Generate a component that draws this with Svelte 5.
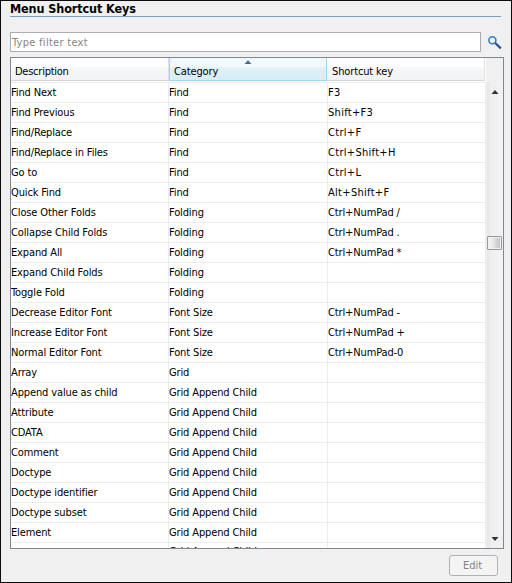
<script>
  const rows = [
    ['Find Next', 'Find', 'F3'],
    ['Find Previous', 'Find', 'Shift+F3'],
    ['Find/Replace', 'Find', 'Ctrl+F'],
    ['Find/Replace in Files', 'Find', 'Ctrl+Shift+H'],
    ['Go to', 'Find', 'Ctrl+L'],
    ['Quick Find', 'Find', 'Alt+Shift+F'],
    ['Close Other Folds', 'Folding', 'Ctrl+NumPad /'],
    ['Collapse Child Folds', 'Folding', 'Ctrl+NumPad .'],
    ['Expand All', 'Folding', 'Ctrl+NumPad *'],
    ['Expand Child Folds', 'Folding', ''],
    ['Toggle Fold', 'Folding', ''],
    ['Decrease Editor Font', 'Font Size', 'Ctrl+NumPad -'],
    ['Increase Editor Font', 'Font Size', 'Ctrl+NumPad +'],
    ['Normal Editor Font', 'Font Size', 'Ctrl+NumPad-0'],
    ['Array', 'Grid', ''],
    ['Append value as child', 'Grid Append Child', ''],
    ['Attribute', 'Grid Append Child', ''],
    ['CDATA', 'Grid Append Child', ''],
    ['Comment', 'Grid Append Child', ''],
    ['Doctype', 'Grid Append Child', ''],
    ['Doctype identifier', 'Grid Append Child', ''],
    ['Doctype subset', 'Grid Append Child', ''],
    ['Element', 'Grid Append Child', ''],
    ['', 'Grid Append Child', '']
  ];
</script>

<div class="window">
  <h1>Menu Shortcut Keys</h1>
  <div class="search">
    <div class="input">Type filter text</div>
    <svg width="15" height="15" viewBox="0 0 15 15">
      <circle cx="4.4" cy="5.2" r="3.5" fill="#f1f6fc" stroke="#2f7ccb" stroke-width="1.6" />
      <path d="M7.2 8 L12.9 13.3" stroke="#23549b" stroke-width="2.3" />
    </svg>
  </div>
  <div class="table">
    <div class="main">
      <div class="head">
        <div class="th">Description</div>
        <div class="th sorted">
          Category
          <svg class="arrow" width="8" height="4" viewBox="0 0 8 4"><path d="M0.5 4 L4 0.2 L7.5 4Z" fill="#3f7089" /></svg>
        </div>
        <div class="th last">Shortcut key</div>
      </div>
      <div class="body">
        {#each rows as row}
          <div class="row">
            <div class="cell">{row[0]}</div>
            <div class="cell category">{row[1]}</div>
            <div class="cell" class:wide={!row[2].includes('NumPad')}>{row[2]}</div>
          </div>
        {/each}
      </div>
    </div>
    <div class="scroll">
      <svg width="8" height="4" viewBox="0 0 8 4"><path d="M0.5 4 L4 0 L7.5 4Z" fill="#333" /></svg>
      <div class="thumb"></div>
      <svg width="8" height="4" viewBox="0 0 8 4"><path d="M0.5 0 L4 4 L7.5 0Z" fill="#333" /></svg>
    </div>
  </div>
  <div class="footer"><div class="button">Edit</div></div>
</div>

<style>
  :global(body) { overflow: hidden; }
  .window {
    box-sizing: border-box;
    width: 512px;
    height: 583px;
    padding: 0 8px 0 9px;
    border: 1px solid #0c0a0c;
    background: #f0f0f0;
    color: #000;
    font: 11px/14px "DejaVu Sans Condensed", "DejaVu Sans", sans-serif;
    white-space: nowrap;
  }
  h1 {
    box-sizing: border-box;
    width: 491px;
    height: 16px;
    margin: 0 0 15px;
    border-bottom: 1px solid #769fc6;
    font-size: 12.5px;
    line-height: 16px;
    font-weight: bold;
    letter-spacing: -0.1px;
  }
  .search { display: flex; gap: 7px; height: 20px; margin-bottom: 5px; }
  .search svg { margin-top: 3px; }
  .input {
    box-sizing: border-box;
    width: 472px;
    height: 20px;
    padding: 3px 1px 0;
    border: 1px solid #abadb3;
    background: #fff;
    color: #858585;
    letter-spacing: 0.28px;
  }
  .table {
    display: flex;
    box-sizing: border-box;
    width: 494px;
    height: 492px;
    border: 1px solid #828790;
    background: #f0f0f0;
    overflow: hidden;
    letter-spacing: -0.13px;
  }
  .main { width: 475px; height: 490px; overflow: hidden; background: #fff; }
  .head { display: flex; height: 24px; background: #fff; }
  .th {
    position: relative;
    box-sizing: border-box;
    width: 158px;
    height: 23px;
    padding: 7px 4px 0;
    border-right: 1px solid #dedfe1;
    border-bottom: 1px solid #d5d5d5;
    background: linear-gradient(#fff 0 9px, #f7f8fa 9px, #f1f2f4);
  }
  .th:first-child { letter-spacing: -0.25px; }
  .sorted {
    border: solid #96d9f9;
    border-width: 0 1px 1px;
    background: linear-gradient(#f2f9fc 0 9px, #e1f1f9 9px, #d8ecf6);
  }
  .arrow { position: absolute; left: 74px; top: 2px; }
  .last { padding-left: 5px; }
  .body { border-top: 1px solid #ececec; }
  .row { display: flex; height: 20px; }
  .cell {
    box-sizing: border-box;
    width: 158px;
    padding-top: 3px;
    border-right: 1px solid #ececec;
    border-bottom: 1px solid #ececec;
  }
  .category { width: 159px; }
  .wide { letter-spacing: 0.3px; }
  .row:last-child .cell { padding-top: 2px; }
  .scroll {
    display: flex;
    flex-direction: column;
    align-items: center;
    box-sizing: border-box;
    width: 15px;
    height: 466px;
    margin: 24px 1px 0 1px;
    padding: 8px 0 7px;
    background: linear-gradient(90deg, #e5e5e5, #efefef 4px, #f2f2f2);
  }
  .thumb {
    box-sizing: border-box;
    width: 15px;
    height: 14px;
    margin: 142px 0 auto;
    border: 1px solid #999;
    border-radius: 1px;
    box-shadow: inset 0 0 0 1px #f0f0f0;
    background: linear-gradient(90deg, #f6f6f6, #e6e6e6 45%, #d2d2d2 65%, #c8c8c8);
  }
  .footer { display: flex; justify-content: flex-end; padding: 6px 5px 0 0; }
  .button {
    box-sizing: border-box;
    width: 49px;
    height: 21px;
    padding-right: 2px;
    border: 1px solid #adb2b5;
    border-radius: 3px;
    background: #f4f4f4;
    color: #838383;
    line-height: 19px;
    text-align: center;
  }
</style>
